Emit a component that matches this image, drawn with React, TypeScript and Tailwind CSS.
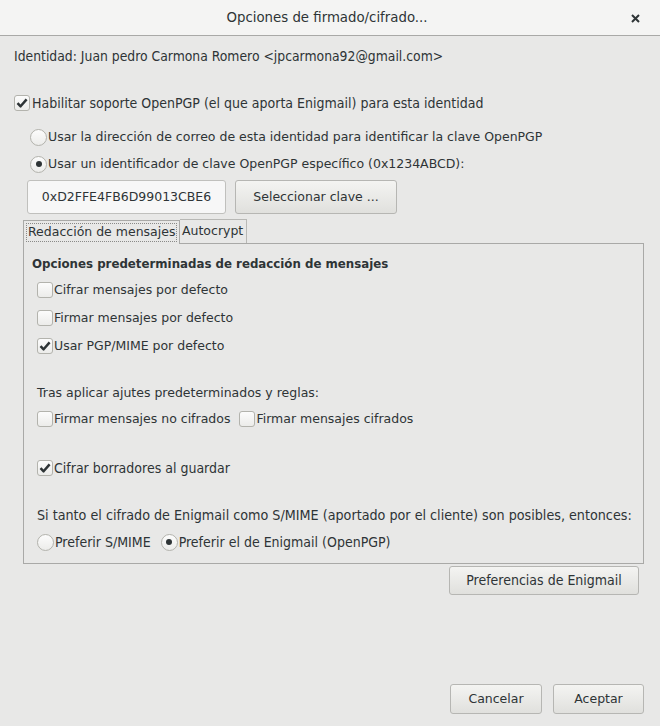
import React from 'react'

const sans = { fontFamily: '"DejaVu Sans", sans-serif' }
const cond = { fontFamily: '"DejaVu Sans", sans-serif', fontStretch: 'condensed' as const }

function Check({ on }: { on?: boolean }) {
  return (
    <span className="inline-flex h-[16px] w-[16px] shrink-0 items-center justify-center rounded-[3px] border border-[#b3b3ad] bg-gradient-to-b from-[#fcfcfc] to-[#ececea]">
      {on && (
        <svg width="12" height="12" viewBox="0 0 12 12">
          <path d="M1.5 6.2 L4.6 9.3 L10.6 2.4" fill="none" stroke="#2e3436" strokeWidth="2.5" strokeLinejoin="round" />
        </svg>
      )}
    </span>
  )
}

function Radio({ on }: { on?: boolean }) {
  return (
    <span className="inline-flex h-[17px] w-[17px] shrink-0 items-center justify-center rounded-full border border-[#b3b3ad] bg-gradient-to-b from-[#fcfcfc] to-[#ececea]">
      {on && <span className="h-[6px] w-[6px] rounded-full bg-[#2e3436]" />}
    </span>
  )
}

function Btn({ children, className = '' }: { children: React.ReactNode; className?: string }) {
  return (
    <div className={`flex items-center justify-center rounded-[3px] border border-[#b6b6b3] bg-gradient-to-b from-[#f4f4f2] to-[#e0e0dd] text-[#2e3436] ${className}`}>
      {children}
    </div>
  )
}

export default function App() {
  return (
    <div className="flex h-[726px] w-[660px] flex-col bg-[#e8e8e7] text-[12.5px] text-[#2e3436]" style={sans}>
      {/* title bar */}
      <div className="relative flex h-[36px] shrink-0 items-center justify-center border-b border-[#a9a9a7] bg-[#f4f4f3]">
        <span className="mr-[6px] text-[14.8px]" style={cond}>Opciones de firmado/cifrado...</span>
        <svg className="absolute right-[20px] top-[14px]" width="9" height="9" viewBox="0 0 9 9">
          <path d="M1 1 L8 8 M8 1 L1 8" stroke="#2e3436" strokeWidth="2" />
        </svg>
      </div>

      <div className="flex flex-1 flex-col px-[14px]">
        <div className="mt-[10px] flex h-[20px] items-center text-[13.8px]" style={cond}>Identidad: Juan pedro Carmona Romero &lt;jpcarmona92@gmail.com&gt;</div>

        <label className="mt-[27px] flex h-[20px] items-center text-[14px]" style={cond}>
          <Check on />
          <span className="ml-[2px]">Habilitar soporte OpenPGP (el que aporta Enigmail) para esta identidad</span>
        </label>

        <div className="ml-[16px] mt-[14px] flex flex-col gap-[7px]">
          <label className="flex h-[20px] items-center"><Radio /><span className="ml-[1px]">Usar la dirección de correo de esta identidad para identificar la clave OpenPGP</span></label>
          <label className="flex h-[20px] items-center"><Radio on /><span className="ml-[1px]">Usar un identificador de clave OpenPGP específico (0x1234ABCD):</span></label>
        </div>

        <div className="ml-[13px] mt-[6px] flex gap-[9px]">
          <div className="flex h-[34px] w-[199px] items-center justify-center rounded-[3px] border border-[#c0c0bd] bg-[#f7f7f7]">0xD2FFE4FB6D99013CBE6</div>
          <Btn className="h-[34px] w-[162px]">Seleccionar clave ...</Btn>
        </div>

        {/* tabs */}
        <div className="ml-[9px] mt-[5px] flex items-end whitespace-nowrap">
          <div className="relative z-10 -mb-px h-[24px] w-[157px] border border-b-0 border-[#a9a9a7] bg-[#e8e8e7] p-[2px]">
            <div className="flex h-full items-center border border-dotted border-[#8a8a88] pl-[1px]">Redacción de mensajes</div>
          </div>
          <div className="flex h-[24px] w-[67px] items-center border border-b-0 border-l-0 border-[#b8b8b5] pl-[2px]">Autocrypt</div>
        </div>
        <div className="ml-[9px] mr-[2px] flex h-[321px] flex-col border border-[#a9a9a7] px-[8px]">
          <div className="mt-[11px] flex h-[20px] items-center text-[11.8px] font-bold">Opciones predeterminadas de redacción de mensajes</div>
          <div className="ml-[5px] mt-[5px] flex flex-col gap-[8px]">
            <label className="flex h-[20px] items-center"><Check /><span className="ml-[1px]">Cifrar mensajes por defecto</span></label>
            <label className="flex h-[20px] items-center"><Check /><span className="ml-[1px]">Firmar mensajes por defecto</span></label>
            <label className="flex h-[20px] items-center"><Check on /><span className="ml-[1px]">Usar PGP/MIME por defecto</span></label>
          </div>
          <div className="ml-[5px] mt-[27px] flex h-[20px] items-center">Tras aplicar ajutes predeterminados y reglas:</div>
          <div className="ml-[5px] mt-[6px] flex h-[20px] items-center">
            <Check /><span className="ml-[1px]">Firmar mensajes no cifrados</span>
            <span className="ml-[9px] flex"><Check /></span><span className="ml-[1px]">Firmar mensajes cifrados</span>
          </div>
          <label className="ml-[5px] mt-[29px] flex h-[20px] items-center text-[14px]" style={cond}><Check on /><span className="ml-[1px]">Cifrar borradores al guardar</span></label>
          <div className="ml-[5px] mt-[28px] flex h-[20px] items-center text-[14.2px]" style={cond}>Si tanto el cifrado de Enigmail como S/MIME (aportado por el cliente) son posibles, entonces:</div>
          <div className="ml-[5px] mt-[6px] flex h-[20px] items-center text-[14px]" style={cond}>
            <Radio /><span className="ml-[1px]">Preferir S/MIME</span>
            <span className="ml-[10px] flex"><Radio on /></span><span className="ml-[1px]">Preferir el de Enigmail (OpenPGP)</span>
          </div>
        </div>
        <div className="mr-[7px] mt-[2px] flex justify-end">
          <Btn className="h-[29px] w-[190px] text-[14px]"><span style={cond}>Preferencias de Enigmail</span></Btn>
        </div>

        <div className="mb-[12px] mr-[2px] mt-auto flex justify-end gap-[11px]">
          <Btn className="h-[30px] w-[92px]">Cancelar</Btn>
          <Btn className="h-[30px] w-[91px]">Aceptar</Btn>
        </div>
      </div>
    </div>
  )
}
